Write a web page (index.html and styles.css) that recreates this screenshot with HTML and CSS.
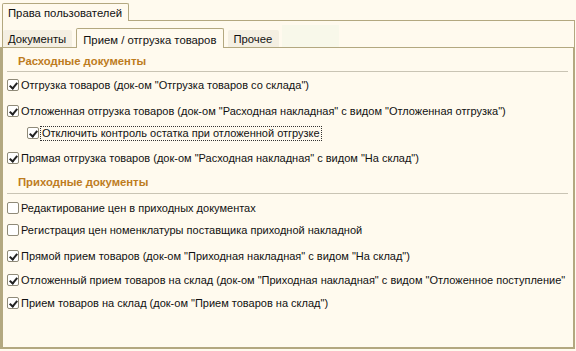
FILE: index.html
```html
<!DOCTYPE html>
<html lang="ru">
  <head>
    <meta charset="UTF-8" />
    <title>Права пользователей</title>
    <link rel="stylesheet" href="styles.css">
  </head>
  <body>
    <div class="outer-tabs">
      <div class="tab outer-tab">Права пользователей</div>
    </div>
    <div class="outer-panel">
      <div class="inner-tabs">
        <div class="tab idle">Документы</div>
        <div class="tab active">Прием / отгрузка товаров</div>
        <div class="tab idle other">Прочее</div>
        <div class="tab ghost"></div>
      </div>
      <div class="inner-panel">
        <div class="group-title">Расходные документы</div>
        <div class="rows">
          <label class="row m5"><span class="box on"></span>Отгрузка товаров (док-ом "Отгрузка товаров со склада")</label>
          <label class="row m10"><span class="box on"></span>Отложенная отгрузка товаров (док-ом "Расходная накладная" с видом "Отложенная отгрузка")</label>
          <label class="row sub m6"><span class="box on"></span><span class="focus">Отключить контроль остатка при отложенной отгрузке</span></label>
          <label class="row m9"><span class="box on"></span>Прямая отгрузка товаров (док-ом "Расходная накладная" с видом "На склад")</label>
        </div>
        <div class="group-title second">Приходные документы</div>
        <div class="rows">
          <label class="row m6"><span class="box"></span>Редактирование цен в приходных документах</label>
          <label class="row m6"><span class="box"></span>Регистрация цен номенклатуры поставщика приходной накладной</label>
          <label class="row m10"><span class="box on"></span>Прямой прием товаров (док-ом "Приходная накладная" с видом "На склад")</label>
          <label class="row m8"><span class="box on"></span>Отложенный прием товаров на склад (док-ом "Приходная накладная" с видом "Отложенное поступление"</label>
          <label class="row m7"><span class="box on"></span>Прием товаров на склад (док-ом "Прием товаров на склад")</label>
        </div>
      </div>
    </div>
  </body>
</html>
```

FILE: styles.css
```css
:root,
body {
  height: 100%;
  margin: 0;
}
body {
  background-color: #fffaee;
  font-family: "Liberation Sans", Arial, sans-serif;
  font-size: 11.3px;
  line-height: 13px;
  color: #111;
  display: flex;
  flex-direction: column;
  overflow: hidden;
}

.outer-tabs {
  display: flex;
  padding: 3px 0 0 2px;
}
.tab {
  box-sizing: border-box;
  white-space: nowrap;
}
.outer-tab {
  height: 18px;
  padding: 3px 6px 0 5px;
  border: 1px solid #b3a880;
  border-bottom: none;
  border-radius: 2px 2px 0 0;
  margin-bottom: -1px;
  background: #fffaee;
  position: relative;
}
.outer-panel {
  flex: 1;
  display: flex;
  flex-direction: column;
  margin-left: 2px;
  margin-right: 1px;
  margin-bottom: 2px;
  border: 1px solid #b3a880;
  border-bottom: none;
}

.inner-tabs {
  display: flex;
  align-items: flex-end;
  height: 26px;
}
.idle {
  height: 17px;
  padding: 3px 6px 0 5px;
  background: #f4efe2;
  border-radius: 2px 2px 0 0;
}
.active {
  height: 20px;
  padding: 5px 7px 0 6px;
  margin: 0 4px -1px 4px;
  border: 1px solid #b3a880;
  border-bottom: none;
  border-radius: 2px 2px 0 0;
  background: #fffaee;
  position: relative;
}
.other {
  width: 51px;
}
.ghost {
  width: 57px;
  height: 22px;
  margin-left: 3px;
  background: #f8f8ea;
}

.inner-panel {
  flex: 1;
  margin-left: -3px;
  margin-right: -1px;
  border: 3px solid #b3a880;
  border-top: 1px solid #b3a880;
  border-right-width: 2px;
  border-bottom-width: 2px;
  padding: 7px 4px 0 4px;
}
.group-title {
  font-weight: bold;
  color: #bd7c1e;
  padding: 0 0 3px 11px;
  border-bottom: 1px solid #c9c4b4;
  margin-right: 1px;
}
.group-title.second {
  margin-top: 10px;
  padding-bottom: 4px;
}
.rows {
  display: flex;
  flex-direction: column;
  font-size: 11px;
}
.row {
  display: flex;
  align-items: center;
  height: 16px;
  gap: 2px;
  white-space: nowrap;
}
.m5 {
  margin-top: 5px;
}
.m6 {
  margin-top: 6px;
}
.m7 {
  margin-top: 7px;
}
.m8 {
  margin-top: 8px;
}
.m9 {
  margin-top: 9px;
}
.m10 {
  margin-top: 10px;
}
.sub {
  padding-left: 20px;
}
.focus {
  outline: 1px dotted #333;
  outline-offset: 0;
  padding: 0 1px;
}
.box {
  box-sizing: border-box;
  width: 12px;
  height: 12px;
  border: 1px solid #8f8a78;
  border-radius: 2px;
  background: #fff;
  position: relative;
  flex: none;
}
.box.on::after {
  content: "";
  position: absolute;
  left: 3px;
  top: 1px;
  width: 3px;
  height: 6px;
  border: solid #222;
  border-width: 0 2px 2px 0;
  transform: rotate(40deg);
}
```
